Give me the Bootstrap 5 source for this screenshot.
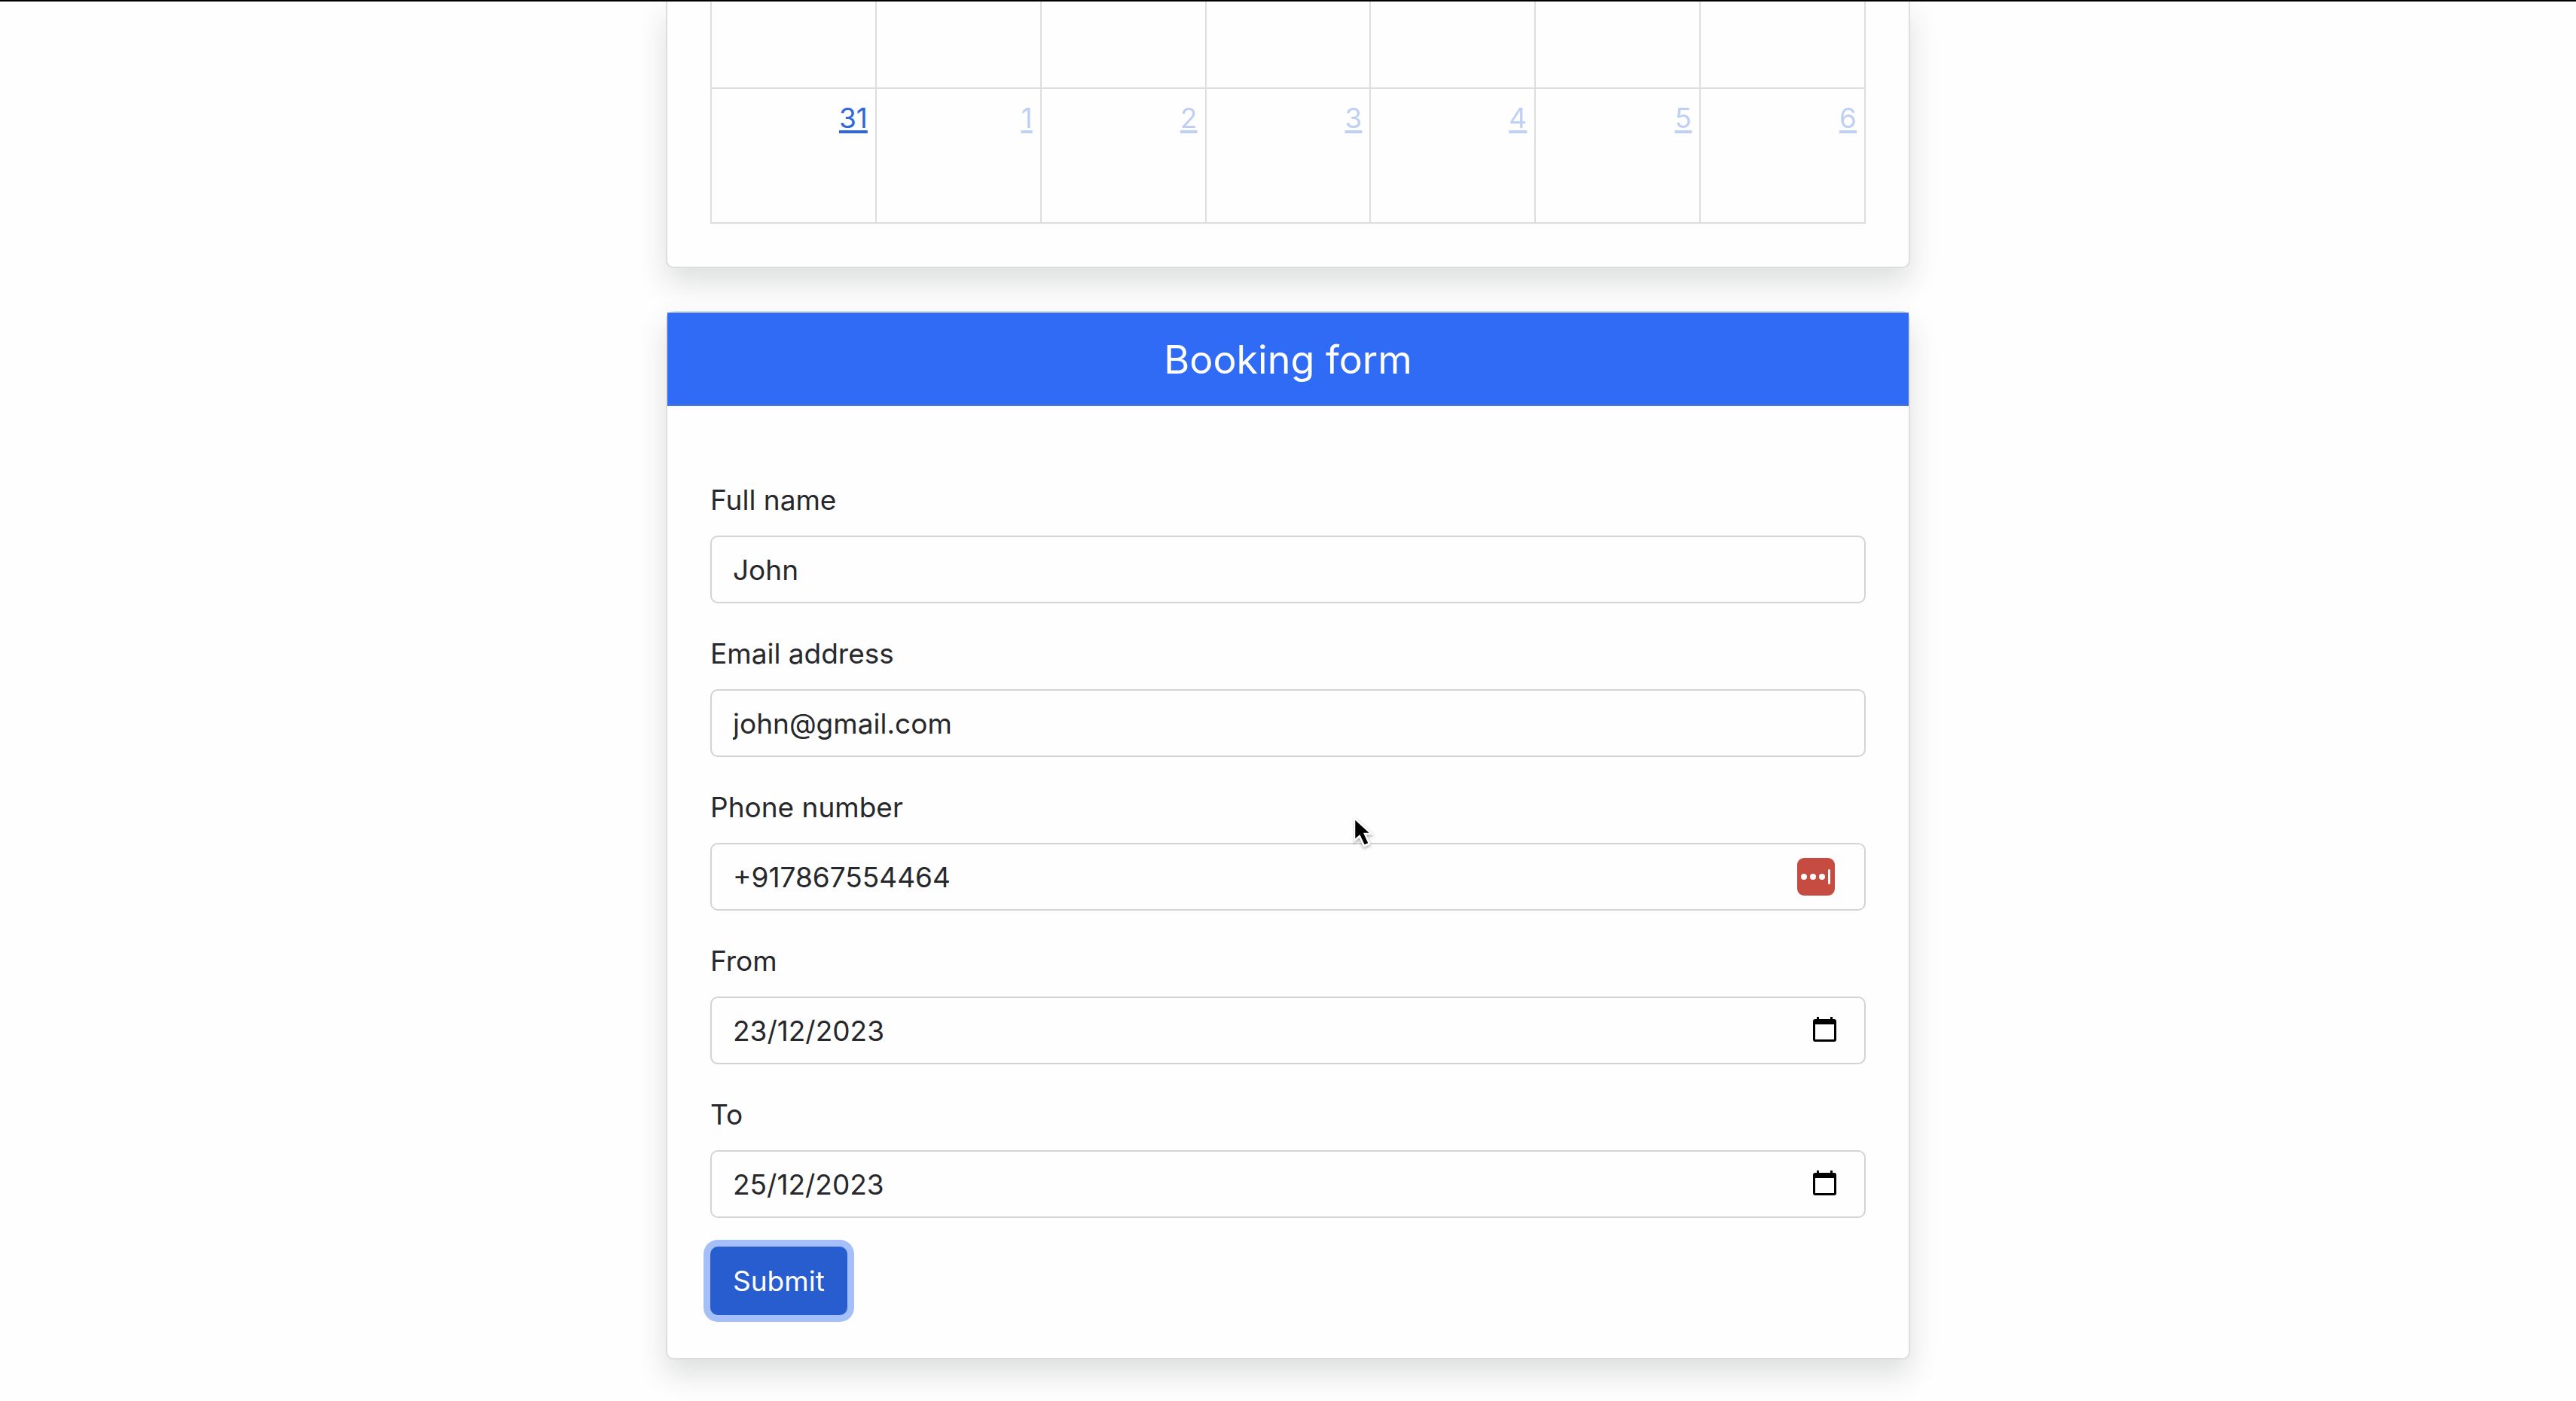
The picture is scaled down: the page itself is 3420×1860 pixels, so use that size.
<!DOCTYPE html>
<html lang="en">
<head>
<meta charset="utf-8">
<meta name="viewport" content="width=device-width, initial-scale=1">
<title>Booking form</title>
<link href="https://cdn.jsdelivr.net/npm/bootstrap@5.3.0/dist/css/bootstrap.min.css" rel="stylesheet">
<style>
  html { font-size: 38px; }
  body {
    font-family: Inter, "Liberation Sans", sans-serif;
    font-size: 37px;
    line-height: 57px;
    color: #27282b;
    background: #fefefe;
    border-top: 2px solid #000;
    position: relative;
  }
  .booking-column { max-width: 1652px; }
  .panel {
    --bs-card-border-width: 2px;
    --bs-card-border-radius: 10px;
    --bs-card-inner-border-radius: 0px;
    --bs-card-bg: #fefefe;
    --bs-card-border-color: #dedede;
  }
  .panel-cut { border-top: 0; border-top-left-radius: 0; border-top-right-radius: 0; }
  .panel-title {
    background: #306bf5;
    color: #fff;
    padding: 29px 38px 25px;
    border-bottom: 2px solid #4676d6;
  }
  .panel-title h3 { font-size: 52px; line-height: 68px; font-weight: 400; }

  .month-grid { table-layout: fixed; border-collapse: collapse; }
  .month-grid td { border: 2px solid #dedede; padding: 10px; height: 179px; text-align: right; vertical-align: top; background: #fefefe; }
  .month-grid .week-cut td { border-top: 0; height: 115px; }
  .month-grid a {
    color: #2f68dd;
    text-decoration: underline;
    text-decoration-thickness: 4px;
    text-underline-offset: 3px;
    text-decoration-skip-ink: none;
  }
  .month-grid .other-month a { opacity: .3; }

  .booking-fields { padding: 96px 57px 57px; }
  .form-label { line-height: 57px; }
  .form-control, .form-control:focus {
    height: 90px;
    border: 2px solid #d0d4d9;
    border-radius: 10px;
    font-size: 37px;
    padding: 14px 28px;
    color: #27282b;
    background: #fefefe;
  }
  .field-action { right: 39px; line-height: 0; }
  .field-action.vault { right: 41px; }
  .submit-btn, .submit-btn:hover {
    height: 91px;
    padding: 0 30px;
    font-size: 37px;
    color: #fff;
    background: #285dd0;
    border: 0;
    border-radius: 10px;
    box-shadow: 0 0 0 9px #a5c0f8;
  }
  .pointer { left: calc(50% + 86px); top: 1081px; pointer-events: none; }
</style>
</head>
<body>
<main class="booking-column w-100 mx-auto">
  <section class="card panel panel-cut shadow mb-4">
    <div class="card-body p-4 pt-0">
      <table class="month-grid w-100 mb-0" aria-label="Calendar">
        <tbody>
          <tr class="week-cut"><td></td><td></td><td></td><td></td><td></td><td></td><td></td></tr>
          <tr>
            <td><a href="#">31</a></td>
            <td class="other-month"><a href="#">1</a></td>
            <td class="other-month"><a href="#">2</a></td>
            <td class="other-month"><a href="#">3</a></td>
            <td class="other-month"><a href="#">4</a></td>
            <td class="other-month"><a href="#">5</a></td>
            <td class="other-month"><a href="#">6</a></td>
          </tr>
        </tbody>
      </table>
    </div>
  </section>

  <section class="card panel shadow mb-4">
    <div class="panel-title text-center"><h3 class="mb-0">Booking form</h3></div>
    <form class="card-body booking-fields">
      <div class="mb-3">
        <label class="form-label d-block mb-2" for="name">Full name</label>
        <input class="form-control" id="name" type="text" value="John">
      </div>
      <div class="mb-3">
        <label class="form-label d-block mb-2" for="email">Email address</label>
        <input class="form-control" id="email" type="email" value="john@gmail.com">
      </div>
      <div class="mb-3">
        <label class="form-label d-block mb-2" for="phone">Phone number</label>
        <div class="position-relative">
          <input class="form-control" id="phone" type="tel" value="+917867554464">
          <button type="button" class="field-action vault btn p-0 border-0 position-absolute top-50 translate-middle-y" aria-label="Fill from password manager">
            <svg width="50" height="50" viewBox="0 0 50 50"><rect width="50" height="50" rx="9" fill="#c64b40"/><g fill="#fff"><circle cx="9" cy="25" r="4"/><circle cx="21" cy="25" r="4"/><circle cx="33" cy="25" r="4"/><rect x="41" y="15" width="3" height="20" rx="1.5"/></g></svg>
          </button>
        </div>
      </div>
      <div class="mb-3">
        <label class="form-label d-block mb-2" for="from">From</label>
        <div class="position-relative">
          <input class="form-control" id="from" type="text" inputmode="numeric" value="23/12/2023">
          <button type="button" class="field-action btn p-0 border-0 position-absolute top-50 translate-middle-y" aria-label="Pick start date">
            <svg width="31" height="36" viewBox="0 0 31 36"><path fill="#000" fill-rule="evenodd" d="M5 0h3v3h15V0h3v3h2a3 3 0 0 1 3 3v24a3 3 0 0 1-3 3H3a3 3 0 0 1-3-3V6a3 3 0 0 1 3-3h2zM3 10v20h25V10z"/></svg>
          </button>
        </div>
      </div>
      <div class="mb-3">
        <label class="form-label d-block mb-2" for="to">To</label>
        <div class="position-relative">
          <input class="form-control" id="to" type="text" inputmode="numeric" value="25/12/2023">
          <button type="button" class="field-action btn p-0 border-0 position-absolute top-50 translate-middle-y" aria-label="Pick end date">
            <svg width="31" height="36" viewBox="0 0 31 36"><path fill="#000" fill-rule="evenodd" d="M5 0h3v3h15V0h3v3h2a3 3 0 0 1 3 3v24a3 3 0 0 1-3 3H3a3 3 0 0 1-3-3V6a3 3 0 0 1 3-3h2zM3 10v20h25V10z"/></svg>
          </button>
        </div>
      </div>
      <button type="submit" class="btn submit-btn d-block">Submit</button>
    </form>
  </section>
</main>
<svg class="pointer position-absolute" width="32" height="48" viewBox="0 0 32 48" aria-hidden="true">
  <path d="M2 3v30l7-6 6 13 7-3-6-13h9z" fill="#000" stroke="#fff" stroke-width="2.5" filter="drop-shadow(0 2px 2px rgba(0,0,0,.35))"/>
</svg>
<script src="https://cdn.jsdelivr.net/npm/bootstrap@5.3.0/dist/js/bootstrap.bundle.min.js"></script>
</body>
</html>
